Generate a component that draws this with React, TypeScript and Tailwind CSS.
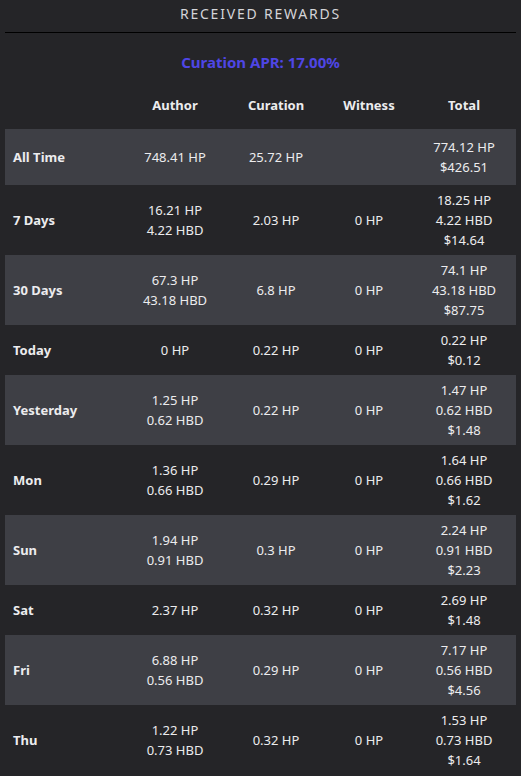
import React from "react";

type Row = {
  label: string;
  author: string[];
  curation: string;
  witness: string;
  total: string[];
  tall?: boolean;
};

const rows: Row[] = [
  { label: "All Time", author: ["748.41 HP"], curation: "25.72 HP", witness: "", total: ["774.12 HP", "$426.51"], tall: true },
  { label: "7 Days", author: ["16.21 HP", "4.22 HBD"], curation: "2.03 HP", witness: "0 HP", total: ["18.25 HP", "4.22 HBD", "$14.64"] },
  { label: "30 Days", author: ["67.3 HP", "43.18 HBD"], curation: "6.8 HP", witness: "0 HP", total: ["74.1 HP", "43.18 HBD", "$87.75"] },
  { label: "Today", author: ["0 HP"], curation: "0.22 HP", witness: "0 HP", total: ["0.22 HP", "$0.12"] },
  { label: "Yesterday", author: ["1.25 HP", "0.62 HBD"], curation: "0.22 HP", witness: "0 HP", total: ["1.47 HP", "0.62 HBD", "$1.48"] },
  { label: "Mon", author: ["1.36 HP", "0.66 HBD"], curation: "0.29 HP", witness: "0 HP", total: ["1.64 HP", "0.66 HBD", "$1.62"] },
  { label: "Sun", author: ["1.94 HP", "0.91 HBD"], curation: "0.3 HP", witness: "0 HP", total: ["2.24 HP", "0.91 HBD", "$2.23"] },
  { label: "Sat", author: ["2.37 HP"], curation: "0.32 HP", witness: "0 HP", total: ["2.69 HP", "$1.48"] },
  { label: "Fri", author: ["6.88 HP", "0.56 HBD"], curation: "0.29 HP", witness: "0 HP", total: ["7.17 HP", "0.56 HBD", "$4.56"] },
  { label: "Thu", author: ["1.22 HP", "0.73 HBD"], curation: "0.32 HP", witness: "0 HP", total: ["1.53 HP", "0.73 HBD", "$1.64"] },
];

const grid = "grid grid-cols-[120px_100px_102px_84px_106px] items-center";

export default function App() {
  return (
    <div
      className="w-[521px] h-[776px] overflow-hidden bg-[#252528] text-[#ececee] text-[13px] leading-[20px]"
      style={{ fontFamily: '"Noto Sans", "Open Sans", sans-serif' }}
    >
      <div className="px-[5px]">
        <div className="h-[33px] border-b border-black flex items-start justify-center pt-[4px]">
          <span className="text-[14px] tracking-[1.8px] text-[#d4d4d8] font-normal">RECEIVED REWARDS</span>
        </div>
        <div className="pt-[19px] text-center font-bold text-[15px] text-[#4f46e5]">Curation APR: 17.00%</div>
        <div className={`${grid} pt-[23px] pb-[14px] font-bold text-center`}>
          <div></div>
          <div>Author</div>
          <div>Curation</div>
          <div>Witness</div>
          <div>Total</div>
        </div>
        <div>
          {rows.map((r, i) => (
            <div
              key={r.label}
              className={`${grid} ${r.tall ? "py-[8px]" : "py-[5px]"} ${i % 2 === 0 ? "bg-[#3e3f45]" : "bg-[#252528]"} text-center`}
            >
              <div className="text-left pl-[8px] font-bold">{r.label}</div>
              <div>
                {r.author.map((a) => (
                  <div key={a}>{a}</div>
                ))}
              </div>
              <div>{r.curation}</div>
              <div>{r.witness}</div>
              <div>
                {r.total.map((t) => (
                  <div key={t}>{t}</div>
                ))}
              </div>
            </div>
          ))}
        </div>
      </div>
    </div>
  );
}
